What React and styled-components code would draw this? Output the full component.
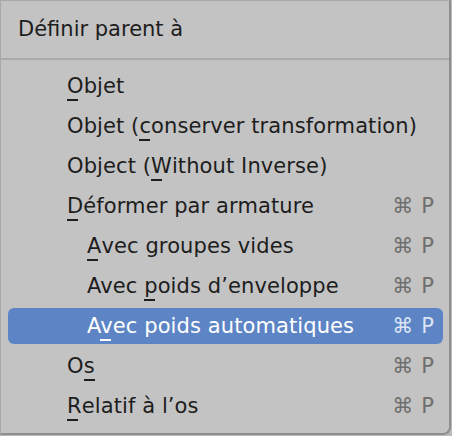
import React from 'react';
import styled, { createGlobalStyle } from 'styled-components';

const GlobalStyle = createGlobalStyle`
  html, body {
    margin: 0;
    padding: 0;
    background: #b9b9b9;
  }
  body {
    font-family: 'DejaVu Sans', 'Noto Sans', sans-serif;
  }
`;

const items = [
  { label: 'Objet', key: 0 },
  { label: 'Objet (conserver transformation)', key: 7 },
  { label: 'Object (Without Inverse)', key: 8 },
  { label: 'Déformer par armature', key: 0, shortcut: true },
  { label: 'Avec groupes vides', key: 0, shortcut: true, sub: true },
  { label: 'Avec poids d’enveloppe', key: 5, shortcut: true, sub: true },
  { label: 'Avec poids automatiques', key: 1, shortcut: true, sub: true, active: true },
  { label: 'Os', key: 1, shortcut: true },
  { label: 'Relatif à l’os', key: 0, shortcut: true },
];

const App = () => {
  return (
    <>
      <GlobalStyle />
      <Menu>
        <Title>Définir parent à</Title>
        <Separator />
        <List>
          {items.map((item, idx) => (
            <Row key={idx} active={item.active}>
              <Label sub={item.sub}>
                {item.label.slice(0, item.key)}
                <Mnemonic>{item.label[item.key]}</Mnemonic>
                {item.label.slice(item.key + 1)}
              </Label>
              {item.shortcut && (
                <Shortcut active={item.active}>
                  <span>⌘</span>
                  <span>P</span>
                </Shortcut>
              )}
            </Row>
          ))}
        </List>
      </Menu>
    </>
  );
};

export default App;

const Menu = styled.div`
  width: 448px;
  height: 432px;
  background: #c3c3c3;
  border-top: 1px solid #a9a9a9;
  border-left: 1px solid #a9a9a9;
  border-right: 2px solid #8e8e8e;
  border-bottom: 2px solid #8e8e8e;
  border-bottom-right-radius: 8px;
  display: flex;
  flex-direction: column;
  color: #1d1d1d;
  font-size: 21px;
  overflow: hidden;
`;

const Title = styled.div`
  height: 57px;
  display: flex;
  align-items: center;
  padding-left: 17px;
  padding-bottom: 1px;
  box-sizing: border-box;
`;

const Separator = styled.div`
  height: 2px;
  background: #aaaaaa;
`;

const List = styled.div`
  display: flex;
  flex-direction: column;
  gap: 4px;
  padding: 8px 6px 0 7px;
`;

const Row = styled.div`
  height: 36px;
  display: flex;
  align-items: center;
  justify-content: space-between;
  padding: 0 9px 0 59px;
  border-radius: 6px;
  background: ${(props) => (props.active ? '#5d85c5' : 'transparent')};
  color: ${(props) => (props.active ? '#ffffff' : '#1d1d1d')};
`;

const Label = styled.span`
  white-space: nowrap;
  letter-spacing: 0.1px;
  padding-left: ${(props) => (props.sub ? '20px' : '0')};
`;

const Mnemonic = styled.span`
  position: relative;
  &::after {
    content: '';
    position: absolute;
    left: 0;
    bottom: -3px;
    width: 11px;
    height: 2px;
    background: currentColor;
  }
`;

const Shortcut = styled.span`
  display: flex;
  gap: 8px;
  color: ${(props) => (props.active ? '#dbe4f3' : '#6e6e6e')};
`;
